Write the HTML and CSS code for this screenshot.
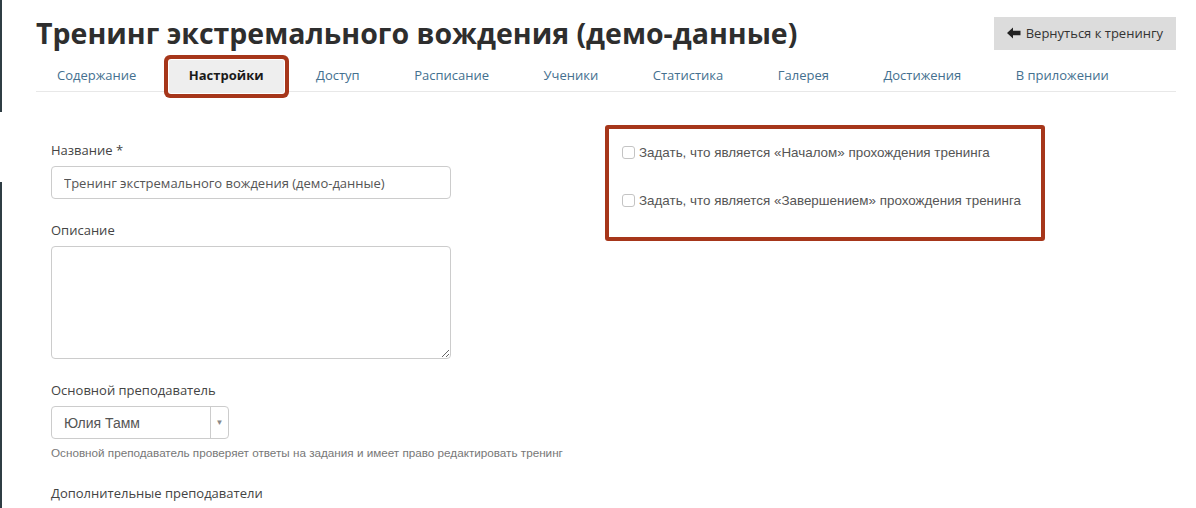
FILE: index.html
```html
<!DOCTYPE html>
<html lang="ru">
<head>
  <meta charset="UTF-8" />
  <title>Тренинг экстремального вождения (демо-данные)</title>
  <link rel="stylesheet" href="styles.css">
</head>
<body>
  <div class="edge"><div class="edge-gap"></div></div>
  <div class="page">
    <div class="header">
      <h1>Тренинг экстремального вождения (демо-данные)</h1>
      <a class="back-btn" href="#">
        <svg width="14" height="12" viewBox="0 0 14 12"><path d="M0 6 L6 0.5 L6 3.8 L13.5 3.8 L13.5 8.2 L6 8.2 L6 11.5 Z" fill="#222"/></svg>
        Вернуться к тренингу
      </a>
    </div>

    <ul class="tabs">
      <li><a href="#">Содержание</a></li>
      <li class="active"><a href="#">Настройки</a></li>
      <li><a href="#">Доступ</a></li>
      <li><a href="#">Расписание</a></li>
      <li><a href="#">Ученики</a></li>
      <li><a href="#">Статистика</a></li>
      <li><a href="#">Галерея</a></li>
      <li><a href="#">Достижения</a></li>
      <li><a href="#">В приложении</a></li>
    </ul>

    <div class="content">
      <div class="form-col">
        <label class="field-label">Название *</label>
        <input class="text-input" type="text" value="Тренинг экстремального вождения (демо-данные)" />

        <label class="field-label">Описание</label>
        <textarea class="text-area"></textarea>

        <label class="field-label">Основной преподаватель</label>
        <div class="select">
          <span class="select-value">Юлия Тамм</span>
          <span class="select-arrow">▼</span>
        </div>
        <div class="help">Основной преподаватель проверяет ответы на задания и имеет право редактировать тренинг</div>

        <label class="field-label">Дополнительные преподаватели</label>
      </div>

      <div class="side-col">
        <div class="marked">
          <label class="check-row"><input type="checkbox" /> Задать, что является «Началом» прохождения тренинга</label>
          <label class="check-row"><input type="checkbox" /> Задать, что является «Завершением» прохождения тренинга</label>
        </div>
      </div>
    </div>
  </div>
</body>
</html>
```

FILE: styles.css
```css
body {
  margin: 0;
  background: #fff;
  font-family: "Open Sans", "Liberation Sans", sans-serif;
  color: #333;
  display: flex;
  min-height: 508px;
  overflow: hidden;
}
.edge {
  width: 2px;
  background: #2f3d44;
  flex-shrink: 0;
  padding-top: 112px;
}
.edge-gap {
  height: 70px;
  background: #fff;
}
.page {
  width: 1140px;
  margin-left: 34px;
}
.header {
  display: flex;
  justify-content: space-between;
  align-items: center;
  padding-top: 13px;
  height: 40px;
}
h1 {
  margin: 0;
  font-size: 28.5px;
  font-weight: 700;
  color: #2e2e2e;
}
.back-btn {
  display: flex;
  align-items: center;
  gap: 5px;
  height: 33px;
  padding: 0 13px;
  background: #dcdcdc;
  color: #333;
  font-size: 13px;
  text-decoration: none;
}
.tabs {
  list-style: none;
  margin: 7px 0 0;
  padding: 0;
  display: flex;
  border-bottom: 1px solid #e8e8e8;
  height: 31px;
}
.tabs li {
  margin-right: 10.5px;
}
.tabs a {
  display: block;
  height: 33px;
  line-height: 31px;
  padding: 0 22px;
  font-size: 13px;
  color: #44708f;
  text-decoration: none;
}
.tabs li:first-child a {
  padding-left: 21px;
}
.tabs .active a {
  padding: 0 20px;
  background: #eee;
  color: #1a1a1a;
  font-weight: 700;
  box-shadow: 0 0 0 1px #fff, 0 0 0 5px #a6361a;
  border-radius: 2px;
}
.content {
  display: grid;
  grid-template-columns: 400px 440px;
  column-gap: 154px;
  padding-left: 15px;
}
.form-col {
  padding-top: 48px;
  display: flex;
  flex-direction: column;
  align-items: flex-start;
}
.field-label {
  font-size: 13px;
  line-height: 20px;
  color: #444;
  margin-bottom: 6px;
}
.text-input,
.text-area {
  box-sizing: border-box;
  width: 400px;
  border: 1px solid #ccc;
  border-radius: 4px;
  font-family: inherit;
  font-size: 13px;
  color: #555;
  margin: 0 0 21px;
}
.text-input {
  height: 33px;
  padding: 0 12px;
}
.text-area {
  height: 113px;
  resize: vertical;
}
.select {
  box-sizing: border-box;
  width: 178px;
  height: 33px;
  border: 1px solid #ccc;
  border-radius: 4px;
  display: flex;
  align-items: center;
  font-family: "Liberation Sans", sans-serif;
  font-size: 14px;
  color: #555;
}
.select-value {
  flex: 1;
  padding-left: 12px;
}
.select-arrow {
  width: 17px;
  height: 100%;
  border-left: 1px solid #ccc;
  display: flex;
  align-items: center;
  justify-content: center;
  font-size: 8px;
  color: #888;
}
.help {
  margin-top: 6px;
  margin-bottom: 22px;
  font-family: "Liberation Sans", sans-serif;
  font-size: 11.7px;
  line-height: 16px;
  color: #777;
  white-space: nowrap;
}
.side-col {
  padding-top: 33px;
}
.marked {
  border: 4px solid #a6361a;
  border-radius: 3px;
  padding: 13px 13px 27px;
  box-sizing: border-box;
  height: 116px;
}
.check-row {
  display: flex;
  align-items: center;
  height: 20px;
  font-family: "Liberation Sans", sans-serif;
  font-size: 13.4px;
  color: #555;
  margin-bottom: 28px;
}
.check-row input {
  appearance: none;
  width: 13px;
  height: 13px;
  margin: 0 4px 0 0;
  border: 1px solid #c4c4c4;
  border-radius: 3px;
  background: #fff;
}
```
